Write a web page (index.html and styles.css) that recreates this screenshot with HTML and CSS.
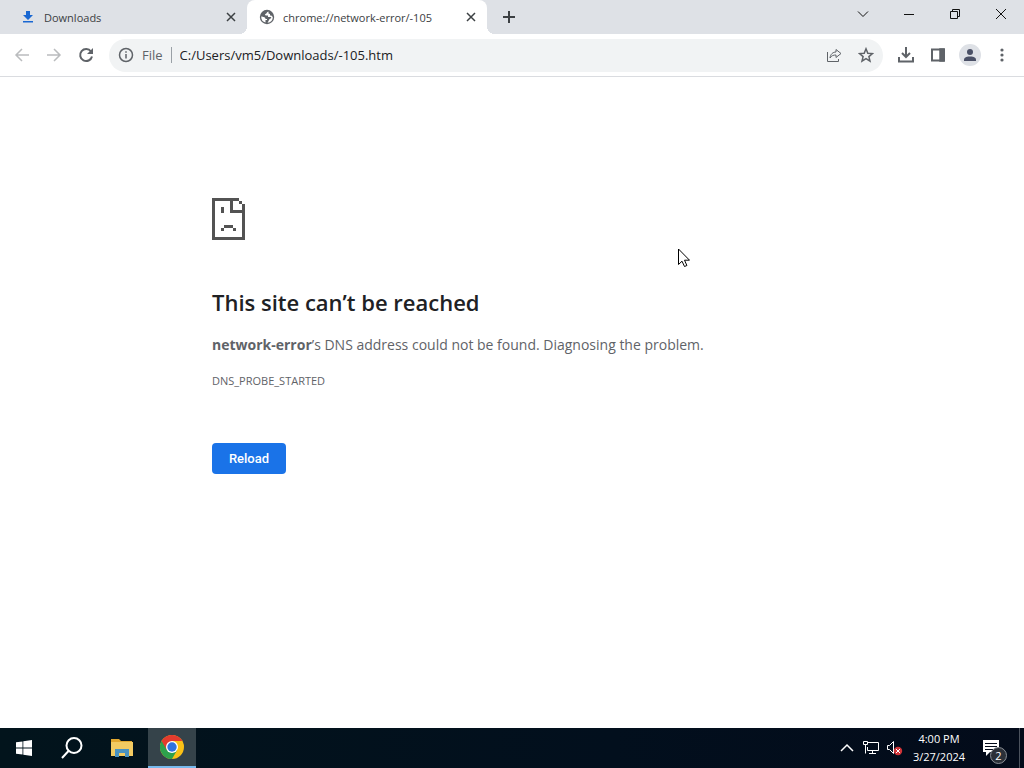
FILE: index.html
```
<!DOCTYPE html>
<html lang="en">
<head>
    <meta charset="UTF-8">
    <meta name="viewport" content="width=device-width, initial-scale=1.0">
    <title>chrome://network-error/-105</title>
    <link rel="stylesheet" href="styles.css">
</head>
<body>
    <header class="tabstrip">
        <div class="tab">
            <svg class="tab-icon" viewBox="0 0 16 16" fill="#1967d2"><path d="M6 2h4v4h3L8 11 3 6h3zM3 12h10v1.500H3z"/></svg>
            <span class="tab-title">Downloads</span>
            <button class="tab-close" aria-label="Close tab"><svg viewBox="0 0 16 16"><path d="M4 4l8 8M12 4l-8 8"/></svg></button>
        </div>
        <div class="tab active">
            <svg class="tab-icon" viewBox="0 0 16 16"><circle cx="8" cy="8" r="7.200" fill="#5f6368"/><path d="M9.500 2.500C7.500 3 8 4.500 6.500 5c-1 .5-.5 1.500.5 1.500h2V8h2.500c1 0 1 1.200 0 1.500-1.500.3-1.500 2-3 4.300C12 13.500 13.800 11 13.800 8l-1.500-1.500H11V5L9.500 4.500zM2.200 7.500c2 .3 4.300.5 4.300 2.500H8v1H6.500v2.500C4 13 2 11 2.200 7.500z" fill="#fff"/></svg>
            <span class="tab-title">chrome://network-error/-105</span>
            <button class="tab-close" aria-label="Close tab"><svg viewBox="0 0 16 16"><path d="M4 4l8 8M12 4l-8 8"/></svg></button>
        </div>
        <button class="new-tab" aria-label="New tab"><svg viewBox="0 0 16 16"><path d="M8 2v12M2 8h12"/></svg></button>
        <div class="window-buttons">
            <button class="tab-search" aria-label="Search tabs"><svg viewBox="0 0 12 12"><path d="M1 3.500l5 5 5-5"/></svg></button>
            <button aria-label="Minimize"><svg viewBox="0 0 12 12"><path d="M1 6.500h10"/></svg></button>
            <button aria-label="Restore"><svg viewBox="0 0 12 12"><path d="M1.500 3.500h7v7h-7zM3.500 3.500v-2h7v7h-2"/></svg></button>
            <button aria-label="Close"><svg viewBox="0 0 12 12"><path d="M1 1l10 10M11 1L1 11"/></svg></button>
        </div>
    </header>

    <nav class="toolbar">
        <button class="tool disabled" aria-label="Back"><svg viewBox="0 0 16 16"><path d="M15 8H2M8 2L2 8l6 6"/></svg></button>
        <button class="tool disabled" aria-label="Forward"><svg viewBox="0 0 16 16"><path d="M1 8h13M8 2l6 6-6 6"/></svg></button>
        <button class="tool" aria-label="Reload page"><svg viewBox="0 0 16 16"><path d="M13 4.500A6 6 0 1 0 14 9.500" stroke-width="2"/><path d="M15 1v6H9z" fill="#5f6368" stroke="none"/></svg></button>
        <div class="omnibox">
            <svg class="info" viewBox="0 0 16 16"><circle cx="8" cy="8" r="6.500"/><path d="M8 7v4.500M8 4.200v1.600"/></svg>
            <label for="url">File</label>
            <input type="text" id="url" value="C:/Users/vm5/Downloads/-105.htm">
            <button class="tool" aria-label="Share"><svg class="thin" viewBox="0 0 16 16"><path d="M1.500 5v9.500h11V12M4 11c.5-4 3-6 6-6V2.500l5 4-5 4V8C7.500 8 5.500 8.500 4 11z"/></svg></button>
            <button class="tool" aria-label="Bookmark"><svg viewBox="0 0 16 16"><path d="M8 1.800l1.800 4.400 4.700.4-3.600 3 1.100 4.600L8 11.700l-4 2.500 1.100-4.600-3.600-3 4.700-.4z"/></svg></button>
        </div>
        <button class="tool" aria-label="Downloads"><svg viewBox="0 0 16 16"><path d="M8 0v9M4 6l4 4 4-4M1 10v4.500h14V10" stroke-width="2"/></svg></button>
        <button class="tool" aria-label="Side panel"><svg viewBox="0 0 16 16"><path d="M2 2.500h12v11H2z" stroke-width="2"/><path d="M10 2h4v12h-4z" fill="#5f6368"/></svg></button>
        <button class="tool profile" aria-label="Profile"><svg viewBox="0 0 22 22"><circle cx="11" cy="11" r="11" fill="#dee1e6"/><circle cx="11" cy="8" r="3" fill="#4a5066"/><path d="M5 17v-1.500C5 13 9 12.500 11 12.500s6 .5 6 3V17z" fill="#4a5066"/></svg></button>
        <button class="tool" aria-label="Menu"><svg viewBox="0 0 16 16"><g fill="#5f6368" stroke="none"><circle cx="8" cy="3" r="1.600"/><circle cx="8" cy="8" r="1.600"/><circle cx="8" cy="13" r="1.600"/></g></svg></button>
    </nav>

    <main class="page">
        <div class="error">
            <svg class="sad-file" viewBox="0 0 11 14" shape-rendering="crispEdges"><path d="M0 0h9v1H7v3h3V2h1v12H0zM1 1v12h9V5H6V1zM9 1h1v1H9zM3 3h1v2H3zM4 9h3v1H4zM3 10h1v1H3zM7 10h1v1H7z" fill="#535353" fill-rule="evenodd"/></svg>
            <h1>This site can’t be reached</h1>
            <p><strong>network-error</strong>’s DNS address could not be found. Diagnosing the problem.</p>
            <div class="error-code">DNS_PROBE_STARTED</div>
            <button class="reload">Reload</button>
        </div>
    </main>

    <!-- Windows taskbar -->
    <footer class="taskbar">
        <button class="task" aria-label="Start"><svg viewBox="0 0 16 16" fill="#fff"><path d="M0 2.300L6.500 1.400V7.600H0zM7.300 1.300L16 0v7.600H7.300zM0 8.400h6.500v6.200L0 13.700zM7.300 8.400H16V16l-8.700-1.300z"/></svg></button>
        <button class="task search" aria-label="Search"><svg viewBox="0 0 24 24" fill="none" stroke="#fff" stroke-width="2"><circle cx="14" cy="9.500" r="7.500"/><path d="M8.500 15L2 22"/></svg></button>
        <button class="task files" aria-label="File Explorer"><svg viewBox="0 0 22 18"><path d="M0 0h8l2 2h11v4H0z" fill="#e3a82f"/><path d="M0 3h22v14H0z" fill="#f3cb62"/><path d="M4 10h14v8h-4v-4H8v4H4z" fill="#4a92c0"/></svg></button>
        <button class="task chrome" aria-label="Google Chrome"><svg viewBox="0 0 24 24"><circle cx="12" cy="12" r="12" fill="#fbc116"/><path d="M12 12L1.600 6A12 12 0 0 0 12 24l5.200-9z" fill="#2da14c"/><path d="M1.600 6A12 12 0 0 1 22.400 6H12v6l-5.200 3z" fill="#e33b2e"/><circle cx="12" cy="12" r="6" fill="#fff"/><circle cx="12" cy="12" r="4.700" fill="#2f73e0"/></svg></button>
        <div class="tray">
            <svg class="chevron" viewBox="0 0 14 14"><path d="M1 10l6-6 6 6" stroke-width="1.500"/></svg>
            <svg class="network" viewBox="0 0 18 16"><path d="M6 2.500h10.500v8H5.500V7M1.500 1.500h4v3h-4zM3.500 4.500v9M10.500 10.500v3M7 13.500h7"/></svg>
            <svg class="sound" viewBox="0 0 18 16"><path d="M1.500 5.500h2l4-4v12l-4-4h-2z"/><circle cx="12" cy="11" r="4.200" fill="#d13438" stroke="none"/><path d="M10 9l4 4M14 9l-4 4"/></svg>
            <div class="clock"><span>4:00 PM</span><span>3/27/2024</span></div>
            <div class="notifications">
                <svg viewBox="0 0 18 18"><path d="M1 1h16v12H8l-4 4v-4H1z" fill="#fff"/><path d="M3 4.500h12M3 7.500h12M3 10.500h8" stroke="#030b1a"/></svg>
                <span class="badge">2</span>
            </div>
        </div>
    </footer>

    <svg class="cursor" viewBox="0 0 12 20"><path d="M.5 1v15.500L4 13.200l2.500 5.300 2.400-1-2.400-5.300h5z" fill="#fff" stroke="#000"/></svg>
</body>
</html>
```
FILE: styles.css
```
* {
    margin: 0;
    padding: 0;
    box-sizing: border-box;
}
body {
    display: flex;
    flex-direction: column;
    min-height: 100vh;
    background: #fff;
    color: #3c4043;
    font-family: "Open Sans", "Noto Sans", sans-serif;
    font-size: 11px;
}
button {
    display: flex;
    align-items: center;
    justify-content: center;
    border: none;
    background: none;
    font: inherit;
}
svg {
    display: block;
    flex: none;
}

/* Tabs */
.tabstrip {
    display: flex;
    height: 34px;
    background: #dee1e6;
}
.tab {
    display: flex;
    align-items: center;
    width: 240px;
    padding: 0 8px 0 12px;
}
.tab:first-child {
    width: 247px;
    padding-left: 20px;
}
.tab.active {
    position: relative;
    background: #fff;
    border-radius: 8px 8px 0 0;
}
/* curved feet of the active tab */
.tab.active::before,
.tab.active::after {
    content: "";
    position: absolute;
    bottom: 0;
    width: 8px;
    height: 8px;
}
.tab.active::before {
    right: 100%;
    background: radial-gradient(circle at 0 0, transparent 8px, #fff 8px);
}
.tab.active::after {
    left: 100%;
    background: radial-gradient(circle at 100% 0, transparent 8px, #fff 8px);
}
.tab-icon {
    width: 16px;
    height: 16px;
    margin-right: 8px;
}
.tab-title {
    flex: 1;
    white-space: nowrap;
}
.tab-close {
    width: 16px;
    height: 16px;
}
.tab-close svg,
.new-tab svg {
    width: 16px;
    height: 16px;
    fill: none;
    stroke: #3c4043;
    stroke-width: 1.5;
}
.new-tab {
    width: 44px;
}
.new-tab svg {
    stroke-width: 2;
}
.window-buttons {
    display: flex;
    margin-left: auto;
    height: 28px;
}
.window-buttons button {
    width: 46px;
}
.window-buttons svg {
    width: 12px;
    height: 12px;
    fill: none;
    stroke: #111;
}

/* Toolbar */
.toolbar {
    display: flex;
    align-items: center;
    height: 43px;
    padding: 0 6px;
    border-bottom: 1px solid #dadce0;
}
.tool {
    width: 32px;
    height: 32px;
}
.tool svg {
    width: 16px;
    height: 16px;
    fill: none;
    stroke: #5f6368;
    stroke-width: 1.5;
}
.tool .thin {
    stroke-width: 1;
}
.tool.disabled svg {
    stroke: #babcbe;
}
.tool.profile svg {
    width: 22px;
    height: 22px;
    stroke: none;
}
.omnibox {
    display: flex;
    flex: 1;
    align-items: center;
    height: 33px;
    margin: 0 7px;
    padding: 0 1px 0 9px;
    border-radius: 17px;
    background: #f1f3f4;
    font-size: 13px;
}
.info {
    width: 16px;
    height: 16px;
    fill: none;
    stroke: #5f6368;
    stroke-width: 1.5;
}
.omnibox label {
    margin: 0 8px;
    color: #5f6368;
}
.omnibox input {
    flex: 1;
    min-width: 0;
    height: 16px;
    padding-left: 8px;
    border: none;
    border-left: 1px solid #9aa0a6;
    outline: none;
    background: none;
    color: #202124;
    font: inherit;
}

/* Error page */
.page {
    flex: 1;
    padding: 121px 24px 24px;
}
.error {
    max-width: 600px;
    margin: 0 auto;
    color: #5f6368;
    font-size: 14px;
    line-height: 24px;
}
.sad-file {
    width: 33px;
    height: 42px;
    margin-bottom: 47px;
}
.error h1 {
    margin-bottom: 16px;
    color: #202124;
    font-size: 22px;
    font-weight: 600;
    line-height: 30px;
}
.error-code {
    margin-top: 12px;
    font-size: 11px;
}
.reload {
    min-width: 74px;
    height: 31px;
    margin-top: 50px;
    padding: 0 16px;
    border-radius: 4px;
    background: #1a73e8;
    color: #fff;
    font-family: Roboto, sans-serif;
    font-size: 13px;
    font-weight: 500;
}

/* Taskbar */
.taskbar {
    display: flex;
    height: 40px;
    background: linear-gradient(90deg, #02141c, #020f1d 60%, #030b1a);
    color: #fff;
}
.task {
    width: 48px;
}
.task svg {
    width: 16px;
    height: 16px;
}
.task.search svg {
    width: 24px;
    height: 24px;
}
.task.files {
    width: 52px;
}
.task.files svg {
    width: 22px;
    height: 18px;
}
.task.chrome {
    background: #35434a;
    border-bottom: 2px solid #76b9ed;
}
.task.chrome svg {
    width: 24px;
    height: 24px;
}
.tray {
    display: flex;
    align-items: center;
    margin-left: auto;
    padding-right: 4px;
}
.tray > svg {
    fill: none;
    stroke: #fff;
}
.chevron {
    width: 14px;
    height: 14px;
    margin-right: 8px;
}
.network,
.sound {
    width: 18px;
    height: 16px;
    margin-right: 6px;
}
.sound {
    margin-right: 4px;
}
.clock {
    display: flex;
    flex-direction: column;
    align-items: center;
    width: 62px;
    line-height: 18px;
    font-size: 11px;
}
.notifications {
    position: relative;
    display: flex;
    align-items: center;
    width: 50px;
    height: 40px;
    padding-left: 12px;
    border-right: 1px solid #4b525d;
}
.notifications svg {
    width: 18px;
    height: 18px;
}
.badge {
    position: absolute;
    right: 12px;
    bottom: 4px;
    width: 17px;
    height: 17px;
    border: 1px solid #8a8f96;
    border-radius: 50%;
    background: #2b3038;
    font-size: 11px;
    line-height: 15px;
    text-align: center;
}

.cursor {
    position: absolute;
    top: 248px;
    left: 678px;
    width: 12px;
    height: 20px;
}
```
